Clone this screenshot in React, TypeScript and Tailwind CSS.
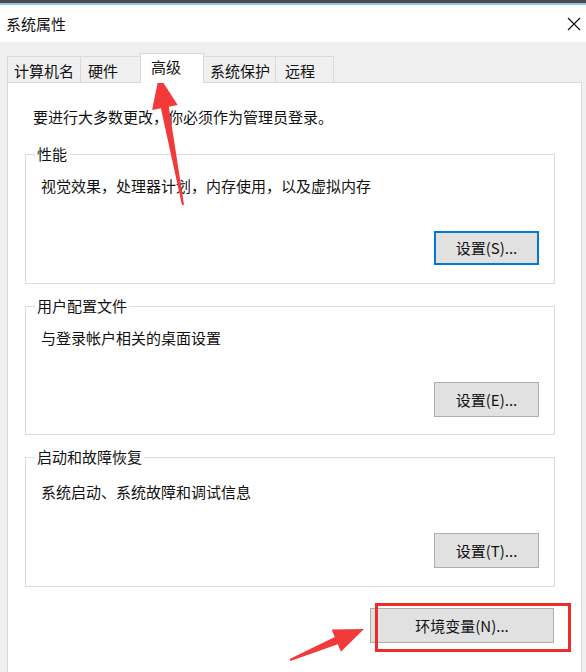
import React from "react";

const font = { fontFamily: '"Noto Sans CJK SC", "Noto Sans", sans-serif' };

function Tab({ label, w, pl, active }: { label: string; w: string; pl: string; active?: boolean }) {
  return (
    <div
      className={
        active
          ? `relative z-10 -ml-px -mb-px h-[30px] border border-b-0 border-[#d9d9d9] bg-white pt-[3px] leading-[20px] ${w} ${pl}`
          : `-ml-px h-[26px] border border-b-0 border-[#d9d9d9] bg-[#f0f0f0] pt-[4px] leading-[20px] ${w} ${pl}`
      }
    >
      {label}
    </div>
  );
}

function Btn({ label, focused }: { label: string; focused?: boolean }) {
  return (
    <div
      className={
        focused
          ? "flex h-[34px] w-[105px] items-center justify-center border-2 border-[#0078d7] bg-[#e1e1e1] leading-[20px]"
          : "flex h-[35px] w-[105px] items-center justify-center border border-[#adadad] bg-[#e1e1e1] leading-[20px]"
      }
    >
      {label}
    </div>
  );
}

export default function App() {
  return (
    <div
      className="relative h-[672px] w-[586px] overflow-hidden bg-[#f0f0f0] text-[15px] text-[#111]"
      style={font}
    >
      <div className="h-[3px] bg-[#4b4b4b]" />
      <div className="h-[2px] bg-[#9cc3ea]" />
      {/* Title bar */}
      <div className="flex h-[37px] items-center justify-between bg-white pl-[6px] pr-[6px]">
        <span className="leading-[20px]">系统属性</span>
        <svg width="14" height="14" viewBox="0 0 14 14" className="mr-[-1px]">
          <path d="M1 1 L13 13 M13 1 L1 13" stroke="#111" strokeWidth="1.2" />
        </svg>
      </div>

      {/* Tabs */}
      <div className="flex items-end pl-[8px] pt-[11px]">
        <Tab label="计算机名" w="w-[74px]" pl="pl-[6px]" />
        <Tab label="硬件" w="w-[61px]" pl="pl-[7px]" />
        <Tab label="高级" w="w-[64px]" pl="pl-[10px]" active />
        <Tab label="系统保护" w="w-[73px]" pl="pl-[6px]" />
        <Tab label="远程" w="w-[59px]" pl="pl-[9px]" />
      </div>

      {/* Panel */}
      <div className="ml-[7px] h-[600px] w-[575px] border border-[#d9d9d9] bg-white pl-[17px] pt-[24px]">
        <div className="pl-[8px] leading-[20px]">要进行大多数更改，你必须作为管理员登录。</div>

        {/* Group 1 */}
        <div className="mt-[27px] h-[130px] w-[530px] border border-[#dcdcdc]">
          <div className="-mt-[11px] ml-[9px] w-fit bg-white px-[2px] leading-[20px]">性能</div>
          <div className="mt-[12px] pl-[15px] leading-[20px]">视觉效果，处理器计划，内存使用，以及虚拟内存</div>
          <div className="mt-[35px] flex justify-end pr-[15px]">
            <Btn label="设置(S)..." focused />
          </div>
        </div>

        {/* Group 2 */}
        <div className="mt-[22px] h-[129px] w-[530px] border border-[#dcdcdc]">
          <div className="-mt-[11px] ml-[9px] w-fit bg-white px-[2px] leading-[20px]">用户配置文件</div>
          <div className="mt-[12px] pl-[15px] leading-[20px]">与登录帐户相关的桌面设置</div>
          <div className="mt-[34px] flex justify-end pr-[15px]">
            <Btn label="设置(E)..." />
          </div>
        </div>

        {/* Group 3 */}
        <div className="mt-[22px] h-[130px] w-[530px] border border-[#dcdcdc]">
          <div className="-mt-[11px] ml-[9px] w-fit bg-white px-[2px] leading-[20px]">启动和故障恢复</div>
          <div className="mt-[15px] pl-[15px] leading-[20px]">系统启动、系统故障和调试信息</div>
          <div className="mt-[31px] flex justify-end pr-[15px]">
            <Btn label="设置(T)..." />
          </div>
        </div>

        {/* Env button */}
        <div className="mt-[21px] flex w-[530px] justify-end pr-[1px]">
          <div className="flex h-[35px] w-[184px] items-center justify-center border border-[#adadad] bg-[#e1e1e1] leading-[20px]">
            环境变量(N)...
          </div>
        </div>
      </div>

      {/* Annotations */}
      <div className="pointer-events-none absolute left-[375px] top-[603px] h-[49px] w-[196px] border-[3px] border-[#ee2b2b]" />
      <svg
        className="pointer-events-none absolute left-0 top-0"
        width="586"
        height="672"
        viewBox="0 0 586 672"
      >
        <polygon
          points="159,76 177.7,105.1 168.8,106.8 184,204.8 182,205.2 160.9,108.2 152.1,109.9"
          fill="#f23a3a"
        />
        <polygon
          points="364,629 340.9,651.7 337.8,644.3 290.4,660.9 289.6,659.1 334.8,636.9 331.7,629.5"
          fill="#f23a3a"
        />
      </svg>
    </div>
  );
}
